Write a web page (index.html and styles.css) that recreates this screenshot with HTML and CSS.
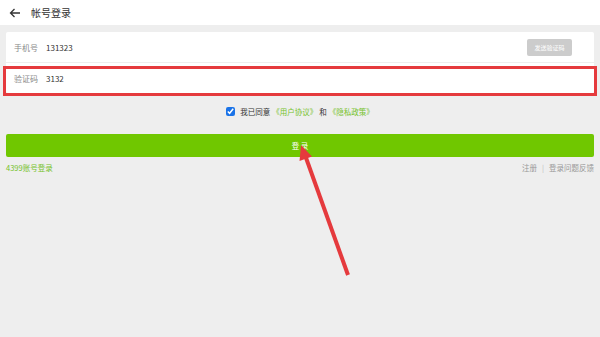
FILE: index.html
```html
<!DOCTYPE html>
<html>
<head>
    <meta charset="utf-8">
    <title>帐号登录</title>
    <link rel="stylesheet" href="styles.css">
</head>
<body>
    <div class="header">
        <svg class="back" width="12" height="10" viewBox="0 0 12 10">
            <path d="M11 5H1.5M5.5 1L1.5 5l4 4" fill="none" stroke="#333" stroke-width="1.3"/>
        </svg>
        <span class="title">帐号登录</span>
    </div>

    <div class="content">
        <div class="card">
            <div class="row">
                <span class="label">手机号</span>
                <span class="value">131323</span>
                <span class="send">发送验证码</span>
            </div>
            <div class="row row-code">
                <span class="label">验证码</span>
                <span class="value">3132</span>
            </div>
        </div>

        <div class="agree">
            <input type="checkbox" checked>
            <span>我已同意</span>
            <a class="link">《用户协议》</a>
            <span>和</span>
            <a class="link">《隐私政策》</a>
        </div>

        <div class="login">登 录</div>

        <div class="bottom">
            <span class="green">4399账号登录</span>
            <span class="more">注册<span class="sep">|</span>登录问题反馈</span>
        </div>
    </div>

    <svg class="pointer" width="600" height="337" viewBox="0 0 600 337">
        <line x1="348" y1="275" x2="305" y2="155" stroke="#e53a3d" stroke-width="4"/>
        <polygon points="301,145 299.5,161 312,156.5" fill="#e53a3d"/>
    </svg>
</body>
</html>
```

FILE: styles.css
```css
body {
    margin: 0;
    background: #eeeeee;
    font-family: "Noto Sans CJK SC", "Noto Sans", sans-serif;
    color: #333333;
    width: 600px;
    height: 337px;
    overflow: hidden;
    position: relative;
}

.header {
    height: 25px;
    background: #ffffff;
    display: flex;
    align-items: center;
}

.back {
    margin-left: 9px;
    margin-right: 10px;
}

.title {
    font-size: 10px;
    color: #333333;
}

.content {
    padding: 7px 6px 0 6px;
}

.card {
    background: #ffffff;
    border-radius: 2px;
}

.row {
    height: 30px;
    display: flex;
    align-items: center;
    padding: 0 8px;
    font-size: 8px;
    position: relative;
}

.row + .row {
    border-top: 1px solid #eeeeee;
}

.label {
    color: #888888;
    width: 32px;
}

.value {
    color: #333333;
    flex: 1;
}

.send {
    background: #cccccc;
    color: #ffffff;
    font-size: 6px;
    width: 45px;
    height: 17px;
    line-height: 17px;
    text-align: center;
    border-radius: 2px;
    margin-right: 14px;
}

.row-code::after {
    content: "";
    position: absolute;
    left: -3px;
    right: -3px;
    top: 3px;
    bottom: -3px;
    border: 3px solid #e53a3d;
}

.agree {
    display: flex;
    align-items: center;
    justify-content: center;
    font-size: 7.5px;
    margin-top: 12px;
    height: 12px;
}

.agree input {
    width: 9px;
    height: 9px;
    margin: 0 3px 0 0;
    accent-color: #1a73e8;
}

.agree span {
    margin: 0 2px;
}

.link {
    color: #76c22c;
}

.login {
    margin-top: 17px;
    height: 23px;
    line-height: 23px;
    background: #70c700;
    color: #ffffff;
    text-align: center;
    font-size: 7.5px;
    border-radius: 2px;
}

.bottom {
    display: flex;
    justify-content: space-between;
    font-size: 7.5px;
    margin-top: 5px;
}

.green {
    color: #76c22c;
}

.more {
    color: #999999;
}

.sep {
    margin: 0 5px;
    color: #bbbbbb;
}

.pointer {
    position: absolute;
    left: 0;
    top: 0;
}
```
